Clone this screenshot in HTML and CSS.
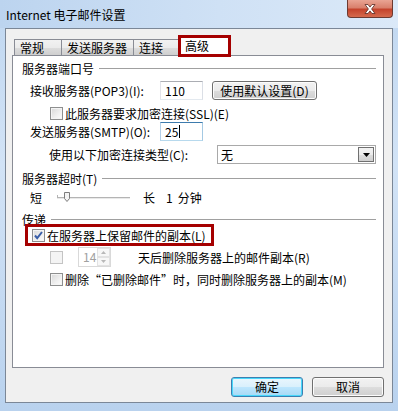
FILE: index.html
```html
<!DOCTYPE html>
<html lang="zh-CN">
<head>
    <meta charset="UTF-8">
    <title>Internet 电子邮件设置</title>
    <link rel="stylesheet" href="styles.css">
</head>
<body>
    <div class="window">
        <div class="titlebar">
            <span class="title">Internet 电子邮件设置</span>
            <div class="close-btn">
                <svg width="14" height="12" viewBox="0 0 14 12">
                    <path d="M2 1.5h3l2 2.6 2-2.6h3l-3.4 4.5 3.4 4.5h-3l-2-2.6-2 2.6h-3l3.4-4.5z" fill="#fff" stroke="#5a2a22" stroke-width="0.8"/>
                </svg>
            </div>
        </div>

        <div class="client">
            <div class="tabs">
                <div class="tab tab-general">常规</div>
                <div class="tab tab-send">发送服务器</div>
                <div class="tab tab-conn">连接</div>
                <div class="tab tab-adv selected">高级</div>
            </div>

            <div class="panel">
                <div class="group-head"><span>服务器端口号</span><div class="line"></div></div>

                <div class="row row-pop">
                    <span class="port-label">接收服务器(POP3)(I):</span>
                    <div class="textbox">110</div>
                    <button class="btn btn-default-set">使用默认设置(D)</button>
                </div>

                <div class="row row-ssl">
                    <span class="checkbox"></span>
                    <span class="check-text">此服务器要求加密连接(SSL)(E)</span>
                </div>

                <div class="row row-smtp">
                    <span class="port-label">发送服务器(SMTP)(O):</span>
                    <div class="textbox focused">25<span class="caret"></span></div>
                </div>

                <div class="row row-enc">
                    <span class="enc-label">使用以下加密连接类型(C):</span>
                    <div class="combo">
                        <span class="combo-value">无</span>
                        <span class="combo-arrow">
                            <svg width="7" height="4" viewBox="0 0 7 4"><path d="M0 0h7l-3.5 4z" fill="#000"/></svg>
                        </span>
                    </div>
                </div>

                <div class="group-head head-timeout"><span>服务器超时(T)</span><div class="line"></div></div>

                <div class="row row-slider">
                    <span>短</span>
                    <svg class="slider" width="73" height="14" viewBox="0 0 73 14">
                        <rect x="0" y="7" width="73" height="1" fill="#b4b4b4"/>
                        <rect x="0" y="8" width="73" height="1" fill="#e9e9e9"/>
                        <rect x="0" y="5" width="1" height="3" fill="#b4b4b4"/>
                        <path d="M7.5 2.5h5v6l-2.5 3-2.5-3z" fill="#f4f4f4" stroke="#7d7d7d"/>
                    </svg>
                    <span class="long-label">长</span>
                    <span class="minutes">1</span>
                    <span>分钟</span>
                </div>

                <div class="group-head head-deliver"><span>传递</span><div class="line"></div></div>

                <div class="row row-keep">
                    <span class="checkbox checked">
                        <svg width="11" height="11" viewBox="0 0 11 11"><path d="M2 5.5l2.2 2.6L9 2" fill="none" stroke="#3a5ea8" stroke-width="2"/></svg>
                    </span>
                    <span class="check-text">在服务器上保留邮件的副本(L)</span>
                </div>

                <div class="row row-days">
                    <span class="checkbox disabled"></span>
                    <div class="spinner">
                        <span class="spin-value">14</span>
                        <span class="spin-buttons">
                            <span class="spin-up"><svg width="5" height="3" viewBox="0 0 5 3"><path d="M0 3h5l-2.5-3z" fill="#b8b8b8"/></svg></span>
                            <span class="spin-down"><svg width="5" height="3" viewBox="0 0 5 3"><path d="M0 0h5l-2.5 3z" fill="#b8b8b8"/></svg></span>
                        </span>
                    </div>
                    <span class="days-text">天后删除服务器上的邮件副本(R)</span>
                </div>

                <div class="row row-delete">
                    <span class="checkbox"></span>
                    <span class="check-text">删除“已删除邮件”时，同时删除服务器上的副本(M)</span>
                </div>
            </div>

            <div class="dialog-buttons">
                <button class="btn btn-primary">确定</button>
                <button class="btn btn-cancel">取消</button>
            </div>
        </div>
    </div>
</body>
</html>
```

FILE: styles.css
```css
body {
    margin: 0;
    font-family: "Noto Sans CJK SC", sans-serif;
    font-size: 12px;
    color: #000;
}
.window {
    width: 398px;
    height: 411px;
    box-sizing: border-box;
    display: flex;
    flex-direction: column;
    background: linear-gradient(to bottom, #c0d7f0 0%, #d2e3f6 40%, #b9d2ee 100%);
}
.titlebar {
    height: 28px;
    display: flex;
    align-items: flex-start;
    justify-content: space-between;
    background: linear-gradient(to right, #bcd4ef 0%, #cfe1f5 55%, #dbe9f8 100%);
}
.title {
    margin: 6px 0 0 6px;
    line-height: 18px;
    font-family: "Noto Sans CJK SC", sans-serif;
    font-size: 12px;
}
.close-btn {
    width: 46px;
    height: 18px;
    margin-right: 5px;
    box-sizing: border-box;
    border: 1px solid #6d3a31;
    border-top: none;
    border-radius: 0 0 4px 4px;
    background: linear-gradient(to bottom, #e9a493 0%, #d9806c 45%, #c4432c 55%, #d56a4d 100%);
    display: flex;
    align-items: center;
    justify-content: center;
}
.client {
    flex: 1;
    margin: 0 5px 8px 5px;
    border: 1px solid #7b8797;
    background-color: #f0f0f0;
    display: flex;
    flex-direction: column;
}
.tabs {
    display: flex;
    align-items: flex-end;
    height: 20px;
    margin: 6px 0 0 8px;
    position: relative;
    z-index: 1;
}
.tab {
    height: 16px;
    box-sizing: border-box;
    border: 1px solid #898c95;
    border-bottom: none;
    padding-left: 5px;
    line-height: 15px;
    background: linear-gradient(to bottom, #f2f2f2 0%, #ebebeb 50%, #dddddd 51%, #cfcfcf 100%);
}
.tab + .tab {
    margin-left: -1px;
}
.tab-general { width: 48px; }
.tab-send { width: 73px; }
.tab-conn { width: 47px; }
.tab.selected {
    width: 53px;
    height: 22px;
    margin-left: -2px;
    margin-bottom: -2px;
    padding-left: 4px;
    border: 3px solid #a50000;
    background: #fff;
    line-height: 15px;
}
.panel {
    height: 313px;
    margin: 0 8px 0 6px;
    box-sizing: border-box;
    border: 1px solid #898c95;
    background-color: #fff;
    padding: 0 7px 0 9px;
    display: flex;
    flex-direction: column;
}
.group-head {
    height: 16px;
    display: flex;
    align-items: center;
    margin-top: 4px;
}
.group-head span {
    padding-right: 5px;
}
.group-head .line {
    flex: 1;
    border-top: 1px solid #a0a0a0;
    margin-top: 1px;
}
.head-timeout,
.head-deliver {
    margin-top: 6px;
}
.row {
    display: flex;
    align-items: center;
}
.row-pop {
    height: 19px;
    margin-top: 5px;
    padding-left: 8px;
}
.port-label {
    width: 130px;
}
.textbox {
    width: 43px;
    height: 19px;
    box-sizing: border-box;
    border: 1px solid;
    border-color: #abadb3 #dbdfe6 #e3e9ef #e2e3ea;
    padding-left: 4px;
    line-height: 17px;
    background: #fff;
    display: flex;
    align-items: center;
}
.textbox.focused {
    border-color: #3d7bad #a4c9e3 #b7d9ed #b5cfe7;
}
.caret {
    width: 1px;
    height: 13px;
    margin-left: 1px;
    background: #000;
}
.btn {
    height: 19px;
    box-sizing: border-box;
    border: 1px solid #707070;
    border-radius: 3px;
    padding: 0;
    font-family: "Noto Sans CJK SC", sans-serif;
    font-size: 12px;
    line-height: 16px;
    color: #000;
    background: linear-gradient(to bottom, #f2f2f2 0%, #ebebeb 50%, #dddddd 51%, #cfcfcf 100%);
    box-shadow: inset 0 0 0 1px #fcfcfc;
}
.btn-default-set {
    width: 105px;
    margin-left: 9px;
}
.row-ssl {
    height: 16px;
    margin-top: 5px;
    padding-left: 28px;
}
.checkbox {
    width: 13px;
    height: 13px;
    box-sizing: border-box;
    border: 1px solid #8e8f8f;
    background: linear-gradient(135deg, #d8d8d8 0%, #f0f0f0 60%, #fdfdfd 100%);
    box-shadow: inset 0 0 0 1px #f4f4f4;
    display: flex;
    align-items: center;
    justify-content: center;
    flex-shrink: 0;
}
.checkbox.disabled {
    border-color: #c4c4c4;
    background: #f4f4f4;
}
.check-text {
    margin-left: 2px;
}
.row-smtp {
    height: 19px;
    margin-top: 1px;
    padding-left: 8px;
}
.row-enc {
    height: 19px;
    margin-top: 4px;
    padding-left: 27px;
}
.enc-label {
    width: 168px;
}
.combo {
    width: 159px;
    height: 19px;
    box-sizing: border-box;
    border: 1px solid #a9a9a9;
    background: #fff;
    display: flex;
    align-items: center;
    justify-content: space-between;
    padding: 0 1px 0 3px;
}
.combo-arrow {
    width: 16px;
    height: 15px;
    box-sizing: border-box;
    border: 1px solid #707070;
    background: linear-gradient(to bottom, #f2f2f2 0%, #ebebeb 50%, #dddddd 51%, #cfcfcf 100%);
    display: flex;
    align-items: center;
    justify-content: center;
}
.row-slider {
    height: 16px;
    margin-top: 3px;
    padding-left: 8px;
}
.slider {
    margin-left: 15px;
}
.long-label {
    margin-left: 13px;
}
.minutes {
    margin: 0 5px 0 11px;
}
.row-keep {
    width: 189px;
    height: 22px;
    box-sizing: border-box;
    margin: -3px 0 0 3px;
    border: 3px solid #a50000;
    padding-left: 4px;
}
.row-days {
    height: 20px;
    margin-top: 1px;
    padding-left: 28px;
}
.spinner {
    width: 33px;
    height: 20px;
    box-sizing: border-box;
    margin-left: 15px;
    border: 1px solid #d9d9d9;
    display: flex;
    justify-content: space-between;
}
.spin-value {
    padding-left: 4px;
    color: #a0a0a0;
    line-height: 18px;
}
.spin-buttons {
    width: 13px;
    display: flex;
    flex-direction: column;
}
.spin-up,
.spin-down {
    flex: 1;
    border: 1px solid #e2e2e2;
    background: #f7f7f7;
    display: flex;
    align-items: center;
    justify-content: center;
}
.days-text {
    margin-left: 27px;
}
.row-delete {
    height: 16px;
    margin-top: 4px;
    padding-left: 28px;
}
.dialog-buttons {
    display: flex;
    justify-content: flex-end;
    margin-top: 9px;
    padding-right: 8px;
}
.dialog-buttons .btn {
    height: 20px;
    width: 72px;
    margin-left: 9px;
}
.btn-primary {
    width: 71px;
    border-color: #3c7fb1;
    background: linear-gradient(to bottom, #eaf6fd 0%, #d9f0fc 50%, #bee6fd 51%, #a7d9f5 100%);
    box-shadow: inset 0 0 0 1px #48d8fb;
}
```
